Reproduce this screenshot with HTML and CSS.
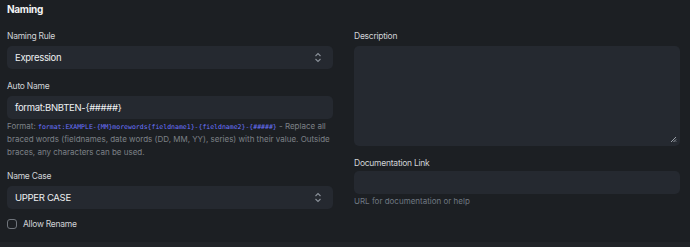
FILE: index.html
```html
<!DOCTYPE html>
<html>
<head>
<meta charset="utf-8">
<link rel="stylesheet" href="styles.css">
</head>
<body>
<section class="section">
  <h2 class="section-title">Naming</h2>
  <div class="columns">
    <div class="column">
      <div class="field">
        <label class="label">Naming Rule</label>
        <div class="control select">
          <span class="value">Expression</span>
          <svg class="arrows" width="8" height="11" viewBox="0 0 8 11"><path d="M1.5 4 L4 1.5 L6.5 4 M1.5 7 L4 9.5 L6.5 7" fill="none" stroke="#8a9099" stroke-width="1.1"/></svg>
        </div>
      </div>
      <div class="field">
        <label class="label">Auto Name</label>
        <div class="control"><span class="value">format:BNBTEN-{#####}</span></div>
        <p class="help">Format: <code class="code">format:EXAMPLE-{MM}morewords{fieldname1}-{fieldname2}-{#####}</code> - Replace all braced words (fieldnames, date words (DD, MM, YY), series) with their value. Outside braces, any characters can be used.</p>
      </div>
      <div class="field">
        <label class="label">Name Case</label>
        <div class="control select">
          <span class="value">UPPER CASE</span>
          <svg class="arrows" width="8" height="11" viewBox="0 0 8 11"><path d="M1.5 4 L4 1.5 L6.5 4 M1.5 7 L4 9.5 L6.5 7" fill="none" stroke="#8a9099" stroke-width="1.1"/></svg>
        </div>
      </div>
      <div class="check-row">
        <span class="checkbox"></span>
        <span class="check-label">Allow Rename</span>
      </div>
    </div>
    <div class="column">
      <div class="field">
        <label class="label">Description</label>
        <div class="control textarea">
          <svg class="grip" width="8" height="8" viewBox="0 0 8 8"><path d="M7 2 L2 7 M7 4.5 L4.5 7 M7 6.5 L6.5 7" stroke="#9aa0a8" stroke-width="1"/></svg>
        </div>
      </div>
      <div class="field">
        <label class="label label-doc">Documentation Link</label>
        <div class="control"></div>
        <p class="help help-muted">URL for documentation or help</p>
      </div>
    </div>
  </div>
</section>
<div class="next-section"></div>
</body>
</html>
```
FILE: styles.css
```css
html, body {
  margin: 0;
  padding: 0;
  background: #1c1f23;
}
body {
  font-family: Inter, "Noto Sans", sans-serif;
  color: #c9ccd0;
  width: 690px;
  height: 247px;
  overflow: hidden;
}
.section {
  padding: 1px 10px 0 7px;
  box-sizing: border-box;
  height: 242px;
}
.section-title {
  margin: 0;
  font-size: 10px;
  letter-spacing: -0.3px;
  font-weight: 700;
  line-height: 16px;
  color: #f2f3f4;
}
.columns {
  display: grid;
  grid-template-columns: 326px 326px;
  column-gap: 21px;
  margin-top: 12px;
}
.field {
  margin-bottom: 10px;
}
.label {
  display: block;
  font-size: 8.5px;
  letter-spacing: -0.25px;
  line-height: 14px;
  color: #d0d3d7;
  margin-bottom: 3px;
}
.label-doc {
  margin-top: 2px;
  margin-bottom: 1px;
}
.control {
  height: 23px;
  background: #252930;
  border-radius: 5px;
  box-sizing: border-box;
  display: flex;
  align-items: center;
  padding: 0 8px;
  position: relative;
}
.value {
  font-size: 9.5px;
  letter-spacing: -0.3px;
  color: #eef0f2;
}
.select {
  justify-content: space-between;
}
.arrows {
  margin-right: 3px;
}
.textarea {
  height: 100px;
  align-items: flex-end;
  justify-content: flex-end;
  padding: 0 3px 3px 0;
}
.help {
  margin: 1px 0 0;
  font-size: 8px;
  line-height: 13px;
  color: #7c8187;
}
.help-muted {
  color: #6f7882;
}
.code {
  font-family: "DejaVu Sans Mono", monospace;
  font-size: 6.5px;
  line-height: 1;
  color: #6b74ff;
}
.check-row {
  display: flex;
  align-items: center;
  gap: 6px;
  margin-top: 1px;
}
.checkbox {
  width: 8px;
  height: 8px;
  border: 1px solid #70757c;
  border-radius: 3px;
}
.check-label {
  font-size: 8.5px;
  letter-spacing: -0.25px;
  color: #d0d3d7;
}
.next-section {
  height: 5px;
  background: #212428;
}
```
